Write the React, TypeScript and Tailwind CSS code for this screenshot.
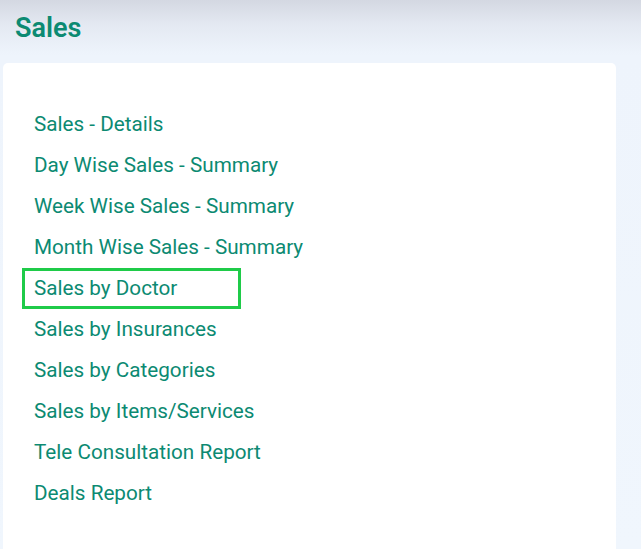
import React from "react";

const items = [
  "Sales - Details",
  "Day Wise Sales - Summary",
  "Week Wise Sales - Summary",
  "Month Wise Sales - Summary",
  "Sales by Doctor",
  "Sales by Insurances",
  "Sales by Categories",
  "Sales by Items/Services",
  "Tele Consultation Report",
  "Deals Report",
];

export default function App() {
  return (
    <div
      className="w-[641px] h-[549px] overflow-hidden bg-[linear-gradient(180deg,#d4d8e2_0px,#e4e9f2_25px,#eef4fc_55px,#f0f6fd_100%)]"
      style={{ fontFamily: "Roboto, 'Liberation Sans', sans-serif" }}
    >
      <h1 className="pl-[15px] pt-[11px] h-[63px] text-[27px] leading-[34px] font-semibold text-[#0c8a72]">
        Sales
      </h1>
      <div className="ml-[3px] w-[613px] h-[520px] bg-white rounded-[5px] pt-[41px]">
        <ul className="flex flex-col">
          {items.map((t) => (
            <li
              key={t}
              className={
                "ml-[19px] w-[219px] h-[41px] flex items-center pl-[9px] border-[3px] whitespace-nowrap text-[20.7px] text-[#0c8a72] " +
                (t === "Sales by Doctor" ? "border-[#1fcb49]" : "border-transparent")
              }
            >
              {t}
            </li>
          ))}
        </ul>
      </div>
    </div>
  );
}
